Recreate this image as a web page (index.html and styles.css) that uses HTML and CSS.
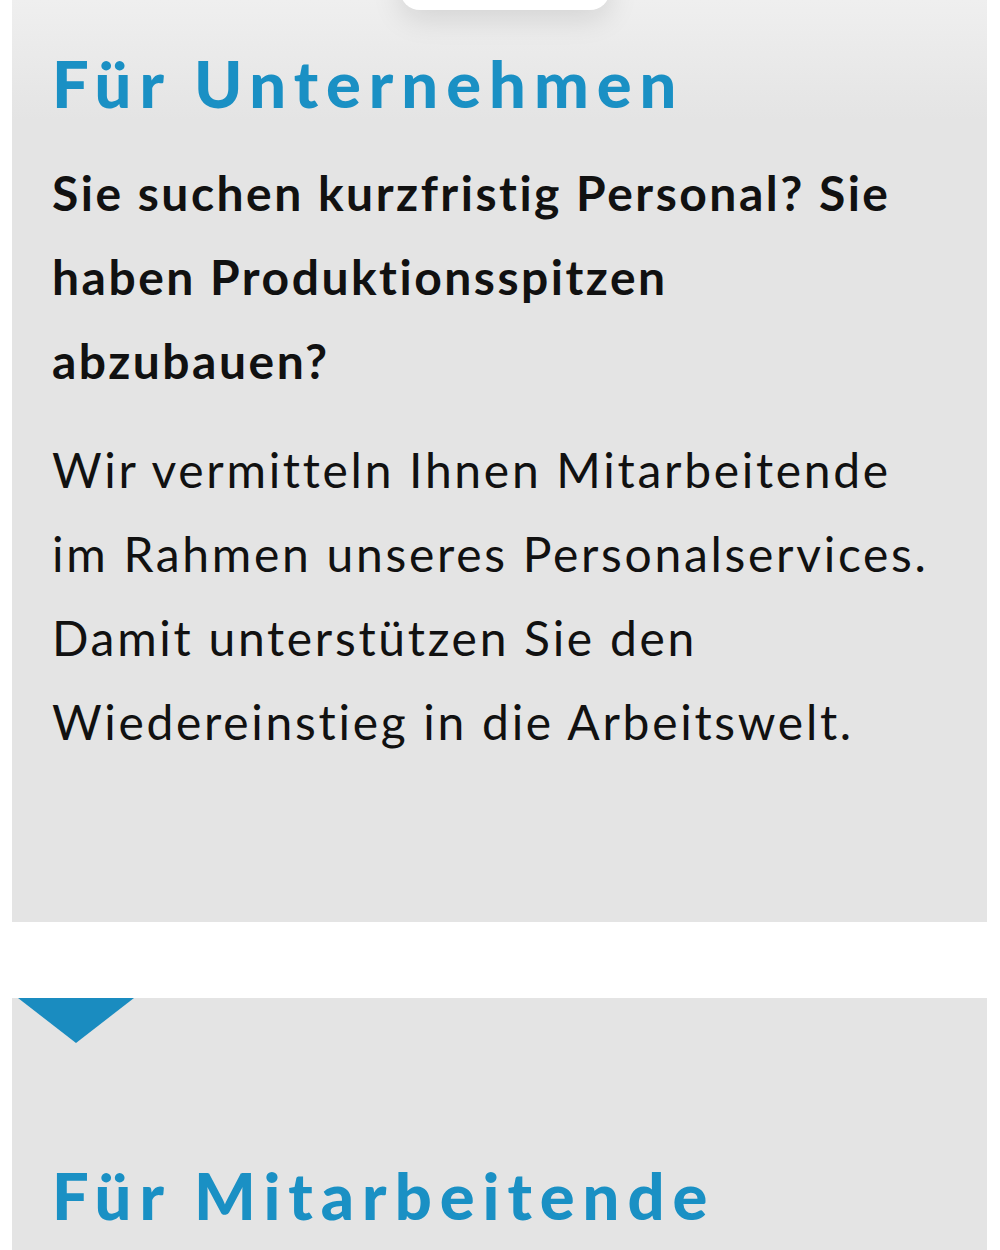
FILE: index.html
```html
<!DOCTYPE html>
<html lang="de">
<head>
    <meta charset="UTF-8">
    <meta name="viewport" content="width=device-width, initial-scale=1.0">
    <title>Personalservice</title>
    <link rel="stylesheet" href="styles.css">
</head>
<body>

    <div class="container">
        <section class="teaser">
            <a href="#" class="menu-tab"></a>
            <h2>Für Unternehmen</h2>
            <p class="lead">Sie suchen kurzfristig Personal? Sie haben Produktionsspitzen abzubauen?</p>
            <p>Wir vermitteln Ihnen Mitarbeitende im Rahmen unseres Personalservices. Damit unterstützen Sie den Wiedereinstieg in die Arbeitswelt.</p>
        </section>

        <section class="teaser teaser-next">
            <span class="marker"></span>
            <h2>Für Mitarbeitende</h2>
        </section>
    </div>

</body>
</html>
```

FILE: styles.css
```css
* {
    margin: 0;
    padding: 0;
    box-sizing: border-box;
}
body {
    font-family: Lato, "Open Sans", sans-serif;
    background-color: #ffffff;
    color: #111111;
}
.container {
    padding: 0 13px 0 12px;
}
.teaser {
    position: relative;
    background-color: #e4e4e4;
    background-image: linear-gradient(#efefef, #e4e4e4 120px);
    padding: 45px 40px 158px;
}
.teaser h2 {
    font-size: 65px;
    line-height: 77px;
    font-weight: 900;
    color: #1a90c4;
    letter-spacing: 8px;
    margin-bottom: 29px;
}
.teaser p {
    font-size: 48px;
    line-height: 84px;
    letter-spacing: 2.7px;
}
.teaser p.lead {
    font-weight: 700;
    letter-spacing: 2.5px;
    margin-bottom: 25px;
}

/* white tab hanging from the top edge */
.menu-tab {
    position: absolute;
    top: -30px;
    left: 388px;
    width: 210px;
    height: 40px;
    background-color: #ffffff;
    border-radius: 0 0 20px 20px;
    box-shadow: 0 8px 30px rgba(0, 0, 0, 0.12);
}

.teaser-next {
    margin-top: 76px;
    background-image: none;
    padding-top: 159px;
}
.marker {
    position: absolute;
    top: 0;
    left: 6px;
    width: 0;
    height: 0;
    border-left: 58px solid transparent;
    border-right: 58px solid transparent;
    border-top: 45px solid #1a8cc0;
}
```
